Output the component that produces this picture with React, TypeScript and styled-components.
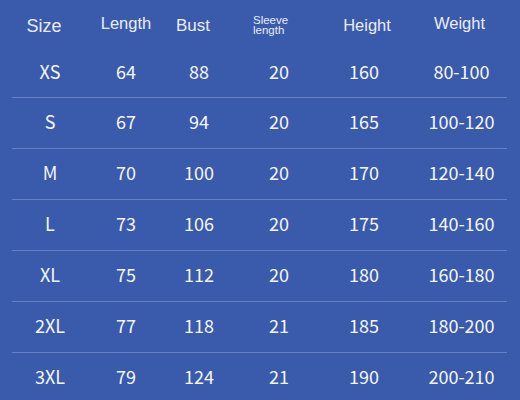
import React from "react";
import styled, { createGlobalStyle } from "styled-components";

const Global = createGlobalStyle`
  html, body { margin: 0; padding: 0; background: #3a5aac; }
  body { width: 520px; height: 400px; overflow: hidden; }
`;

const Page = styled.div`
  width: 520px;
  height: 400px;
  background: #3a5aac;
  box-sizing: border-box;
  padding: 0 13px 0 12px;
`;

const cols = "88px 52px 94px 66px 104px 91px";

const HeaderRow = styled.div`
  display: grid;
  grid-template-columns: ${cols};
  height: 49px;
  align-items: center;
`;

const HeadCell = styled.div<{ $dx?: number; $dy?: number; $size?: number }>`
  text-align: center;
  white-space: nowrap;
  font-family: "Liberation Sans", Arial, sans-serif;
  font-size: ${(p) => p.$size ?? 16.5}px;
  color: #e9edf8;
  line-height: 1;
  transform: translate(${(p) => p.$dx ?? 0}px, ${(p) => p.$dy ?? 0}px);
`;

const SmallHead = styled.div`
  text-align: left;
  font-family: "Liberation Sans", Arial, sans-serif;
  font-size: 11.5px;
  line-height: 10px;
  color: #e9edf8;
  padding-left: 7px;
`;

const Row = styled.div<{ $first?: boolean }>`
  display: grid;
  grid-template-columns: ${cols};
  height: ${(p) => (p.$first ? 48 : 50)}px;
  align-items: center;
  border-bottom: 1px solid #6580c4;
  &:last-child { border-bottom: none; }
`;

const Cell = styled.div<{ $dx?: number }>`
  text-align: center;
  white-space: nowrap;
  font-family: "Noto Sans CJK SC", "Noto Sans", sans-serif;
  font-size: 18px;
  color: #f4f6fc;
  line-height: 1;
  transform: translate(${(p) => p.$dx ?? 0}px, -2px);
`;

const data = [
  ["XS", "64", "88", "20", "160", "80-100"],
  ["S", "67", "94", "20", "165", "100-120"],
  ["M", "70", "100", "20", "170", "120-140"],
  ["L", "73", "106", "20", "175", "140-160"],
  ["XL", "75", "112", "20", "180", "160-180"],
  ["2XL", "77", "118", "21", "185", "180-200"],
  ["3XL", "79", "124", "21", "190", "200-210"],
];

const shifts = [-6, 0, 0, 0, 0, 0];

export default function App() {
  return (
    <>
      <Global />
      <Page>
        <HeaderRow>
          <HeadCell $dx={-12} $dy={1} $size={18}>Size</HeadCell>
          <HeadCell $dy={-1}>Length</HeadCell>
          <HeadCell $dx={-6} $dy={1} $size={17}>Bust</HeadCell>
          <SmallHead>
            Sleeve
            <br />
            length
          </SmallHead>
          <HeadCell $dx={3} $dy={1}>Height</HeadCell>
          <HeadCell $dx={-2} $dy={-1}>Weight</HeadCell>
        </HeaderRow>
        {data.map((r, i) => (
          <Row key={r[0]} $first={i === 0}>
            {r.map((c, j) => (
              <Cell key={j} $dx={shifts[j]}>
                {c}
              </Cell>
            ))}
          </Row>
        ))}
      </Page>
    </>
  );
}
